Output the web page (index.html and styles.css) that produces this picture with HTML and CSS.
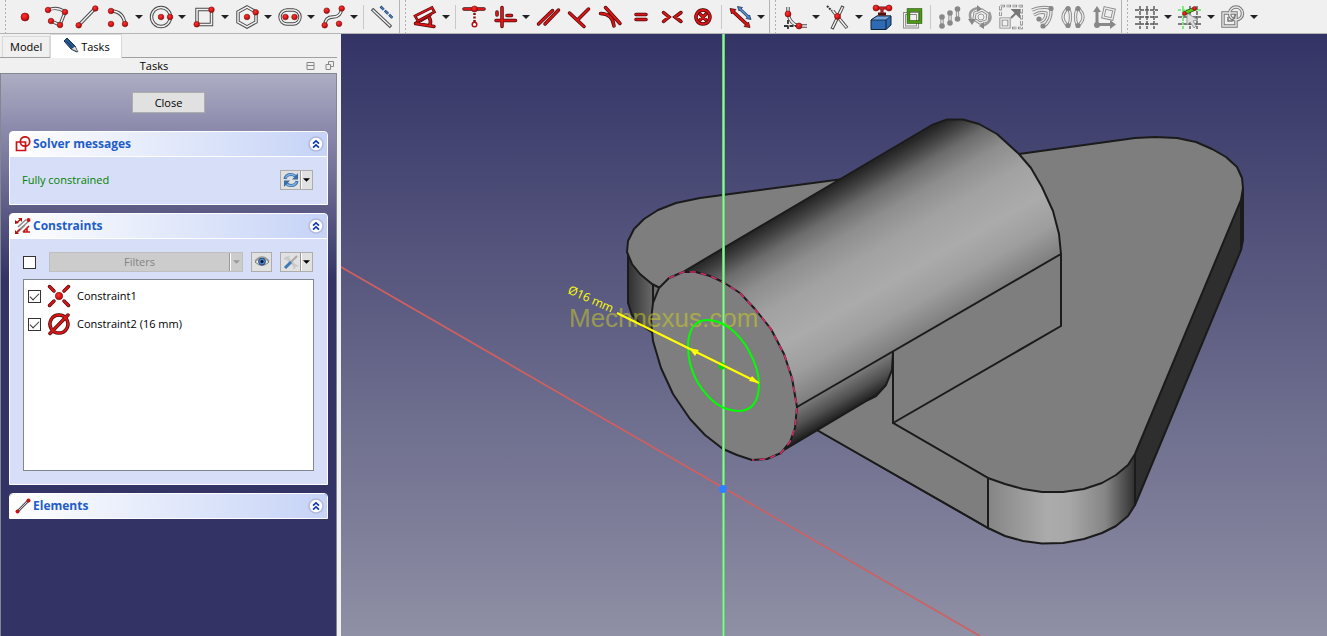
FILE: index.html
```
<!DOCTYPE html>
<html lang="en">
<head>
<meta charset="utf-8">
<title>Sketcher</title>
<link rel="stylesheet" href="styles.css">
</head>
<body>
<svg class="defs" aria-hidden="true">
  <defs>
    <radialGradient id="ball" cx="0.4" cy="0.35" r="0.7"><stop offset="0" stop-color="#f33"/><stop offset="0.6" stop-color="#d81414"/><stop offset="1" stop-color="#900"/></radialGradient>
    <symbol id="chev" viewBox="0 0 16 16"><circle cx="8" cy="8" r="7" fill="#fff" stroke="#b4b9dc" stroke-width="1.6"/><path d="M5 7.6 8 4.8 11 7.6M5 11.6 8 8.8 11 11.6" fill="none" stroke="#0c38a8" stroke-width="1.6"/></symbol>
    <symbol id="tri" viewBox="0 0 8 4"><path d="M0 0H8L4 4Z"/></symbol>
  </defs>
</svg>
<header class="toolbars">
  <div class="bar" role="toolbar" aria-label="Geometries">
    <button class="tool" aria-label="Point"><svg viewBox="0 0 24 24"><circle class="dot" cx="12" cy="12" r="4"/></svg></button>
    <button class="tool" aria-label="Polyline"><svg viewBox="0 0 24 24"><path class="wo" d="M4 5Q13 1 21 7L16 20 7 16"/><path class="wi" d="M4 5Q13 1 21 7L16 20 7 16"/><g class="dot"><circle cx="4" cy="5" r="2.8"/><circle cx="21" cy="7" r="2.8"/><circle cx="16" cy="20" r="2.8"/><circle cx="7" cy="16" r="2.8"/></g></svg></button>
    <button class="tool" aria-label="Line"><svg viewBox="0 0 24 24"><path class="wo" d="M4 20 20 3.5"/><path class="wi" d="M4 20 20 3.5"/><g class="dot"><circle cx="3.7" cy="20.3" r="2.8"/><circle cx="20.3" cy="3.5" r="2.8"/></g></svg></button>
    <button class="tool" aria-label="Arc"><svg viewBox="0 0 24 24"><path class="wo" d="M5 6Q17 6 19 19"/><path class="wi" d="M5 6Q17 6 19 19"/><g class="dot"><circle cx="5" cy="6" r="2.8"/><circle cx="5" cy="19" r="2.8"/><circle cx="19" cy="19" r="2.8"/></g></svg></button><button class="drop" aria-label="Arc options"><svg><use href="#tri"/></svg></button>
    <button class="tool" aria-label="Circle"><svg viewBox="0 0 24 24"><circle class="wo" cx="12" cy="12" r="9.5"/><circle class="wi" cx="12" cy="12" r="9.5"/><g class="dot"><circle cx="12" cy="12" r="2.8"/><circle cx="21" cy="12" r="2.8"/></g></svg></button><button class="drop" aria-label="Circle options"><svg><use href="#tri"/></svg></button>
    <button class="tool" aria-label="Rectangle"><svg viewBox="0 0 24 24"><path class="wo" d="M5 4.5H19.5V19.5H5Z"/><path class="wi" d="M5 4.5H19.5V19.5H5Z"/><g class="dot"><circle cx="19.5" cy="4.7" r="2.8"/><circle cx="4.7" cy="19.3" r="2.8"/></g></svg></button><button class="drop" aria-label="Rectangle options"><svg><use href="#tri"/></svg></button>
    <button class="tool" aria-label="Polygon"><svg viewBox="0 0 24 24"><path class="wo" d="M12 2 21 7V17L12 22 3 17V7Z"/><path class="wi" d="M12 2 21 7V17L12 22 3 17V7Z"/><g class="dot"><circle cx="12" cy="12" r="2.8"/><circle cx="20.7" cy="7.3" r="2.8"/></g></svg></button><button class="drop" aria-label="Polygon options"><svg><use href="#tri"/></svg></button>
    <button class="tool" aria-label="Slot"><svg viewBox="0 0 24 24"><rect class="wo" x="2" y="5" width="20" height="14" rx="7"/><rect class="wi" x="2" y="5" width="20" height="14" rx="7"/><g class="dot"><circle cx="7.5" cy="12" r="2.8"/><circle cx="16.5" cy="12" r="2.8"/></g></svg></button><button class="drop" aria-label="Slot options"><svg><use href="#tri"/></svg></button>
    <button class="tool" aria-label="B-spline"><svg viewBox="0 0 24 24"><path class="wo" d="M4 20Q4 12 12 12T20.5 3.5"/><path class="wi" d="M4 20Q4 12 12 12T20.5 3.5"/><g class="dot"><circle cx="5.7" cy="5.7" r="2.8"/><circle cx="3.7" cy="20.3" r="2.8"/><circle cx="20.7" cy="3.5" r="2.8"/><circle cx="18" cy="18.7" r="2.8"/></g></svg></button><button class="drop" aria-label="B-spline options"><svg><use href="#tri"/></svg></button>
    <span class="sep"></span>
    <button class="tool" aria-label="Toggle construction"><svg viewBox="0 0 24 24"><path class="wo" d="M2 4 21 22"/><path class="wi" d="M2.7 4.7 20.3 21.3"/><path d="M10.500 1.500 23 13.500" fill="none" stroke="#1f3d66" stroke-width="2.600" stroke-dasharray="4.500 1.500"/><path d="M11 2 23 13.500" fill="none" stroke="#4a82c4" stroke-width="1.400" stroke-dasharray="4 2"/></svg></button>
  </div>
  <div class="bar" role="toolbar" aria-label="Constraints">
    <button class="tool" aria-label="Dimension"><svg viewBox="0 0 24 24"><path class="ro" d="M2.500 18.500 17 10M2.500 18.500 21 21.500M16 12Q18.500 16 17 20"/><path class="ri" d="M2.500 18.500 17 10M2.500 18.500 21 21.500M16 12Q18.500 16 17 20"/><path d="M2 11 19 2.500 21.500 7 5 16Z" fill="#f4f4f4" stroke="#4a0808" stroke-width="2.600"/><path d="M2 11 19 2.500 21.500 7 5 16Z" fill="none" stroke="#dc1616" stroke-width="1.400"/></svg></button><button class="drop" aria-label="Dimension options"><svg><use href="#tri"/></svg></button>
    <span class="sep"></span>
    <button class="tool" aria-label="Horizontal or vertical"><svg viewBox="0 0 24 24"><path class="ro" d="M2 4H22"/><path class="ri" d="M2 4H22"/><path d="M12.500 8V17" stroke="#8a1010" stroke-width="2.500" stroke-dasharray="2 1.500"/><circle class="dot" cx="12.500" cy="4" r="3"/><circle cx="12.500" cy="19.500" r="2.300" fill="#fff" stroke="#b01010" stroke-width="1.500"/></svg></button>
    <button class="tool" aria-label="Axis constraint"><svg viewBox="0 0 24 24"><path class="ro" d="M9 2.500V21.500M3 15.500H22.500M4 7V10M14 10.500H18.500"/><path class="ri" d="M9 2.500V21.500M3 15.500H22.500M4 7V10M14 10.500H18.500"/></svg></button><button class="drop" aria-label="Axis constraint options"><svg><use href="#tri"/></svg></button>
    <button class="tool" aria-label="Parallel"><svg viewBox="0 0 24 24"><path class="ro" d="M2.500 19 16.500 5.500M9 19 22.500 5"/><path class="ri" d="M2.500 19 16.500 5.500M9 19 22.500 5"/></svg></button>
    <button class="tool" aria-label="Perpendicular"><svg viewBox="0 0 24 24"><path class="ro" d="M2.500 8 17 21.500M21.500 4 11 14.500"/><path class="ri" d="M2.500 8 17 21.500M21.500 4 11 14.500"/></svg></button>
    <button class="tool" aria-label="Tangent"><svg viewBox="0 0 24 24"><path class="ro" d="M7.500 2.500 22 18.500M2.500 8.500Q14.500 8.500 16 21"/><path class="ri" d="M7.500 2.500 22 18.500M2.500 8.500Q14.500 8.500 16 21"/></svg></button>
    <button class="tool" aria-label="Equal"><svg viewBox="0 0 24 24"><path class="ro" d="M7 9.500H17M7 14.500H17"/><path class="ri" d="M7 9.500H17M7 14.500H17"/></svg></button>
    <button class="tool" aria-label="Symmetric"><svg viewBox="0 0 24 24"><path class="ro" d="M3.500 7.500 9 12 3.500 16.500M21 7.500 15 12 21 16.500"/><path class="ri" d="M3.500 7.500 9 12 3.500 16.500M21 7.500 15 12 21 16.500"/></svg></button>
    <button class="tool" aria-label="Block"><svg viewBox="0 0 24 24"><path class="ro" d="M12 5A7 7 0 1 1 11.9 5M9 9 15 15M15 9 9 15"/><path class="ri" d="M12 5A7 7 0 1 1 11.9 5M9 9 15 15M15 9 9 15"/></svg></button>
    <span class="sep"></span>
    <button class="tool" aria-label="Toggle driving"><svg viewBox="0 0 24 24"><path d="M5 6.500 19 19.500" stroke="#4a0808" stroke-width="3.600"/><path d="M2 3.500 8 4.500 3.500 9ZM22 22.500 16 21.500 20.500 17Z" fill="#dc1616" stroke="#4a0808" stroke-width=".8"/><path d="M5 6.500 19 19.500" stroke="#dc1616" stroke-width="2"/><path d="M12 4 20.500 12" stroke="#1f3d66" stroke-width="3"/><path d="M9.500 1.500 14.500 2.500 11 6ZM23 14.500 18 13.500 21.500 10Z" fill="#4a82c4" stroke="#1f3d66" stroke-width=".8"/><path d="M12 4 20.500 12" stroke="#5d93d0" stroke-width="1.500"/></svg></button><button class="drop" aria-label="Toggle driving options"><svg><use href="#tri"/></svg></button>
  </div>
  <div class="bar" role="toolbar" aria-label="Sketcher tools">
    <button class="tool" aria-label="Fillet"><svg viewBox="0 0 24 24"><path class="wo" d="M5 2V9Q7 19 16 21H24"/><path class="wi" d="M5 2V9Q7 19 16 21H24"/><path d="M5 15V24M1 21H14" stroke="#333" stroke-width="1.800" stroke-dasharray="4 1.500"/><g class="dot"><circle cx="5" cy="9" r="3"/><circle cx="16" cy="21" r="3"/></g></svg></button><button class="drop" aria-label="Fillet options"><svg><use href="#tri"/></svg></button>
    <button class="tool" aria-label="Trim"><svg viewBox="0 0 24 24"><path class="wo" d="M7 6 21 23M17 1 6 24"/><path class="wi" d="M7 6 20.500 22.400M16.600 2 6.400 23"/><path d="M1 1 6 6" stroke="#333" stroke-width="2" stroke-dasharray="2 1"/><circle class="dot" cx="11.500" cy="11.500" r="3"/></svg></button><button class="drop" aria-label="Trim options"><svg><use href="#tri"/></svg></button>
    <button class="tool" aria-label="External geometry"><svg viewBox="0 0 24 24"><path d="M2 15 8 11H22V20L17 24.500H2Z" fill="#2f6bb5" stroke="#123" /><path d="M2 15 8 11H22L17 15Z" fill="#71a5e0" stroke="#123" stroke-width=".8"/><path d="M17 15V24" stroke="#123"/><path d="M7 3H19M13 3V9M9 9H17" stroke="#511" stroke-width="3"/><path d="M7 3H19M13 3V8" stroke="#d22" stroke-width="1.500"/><g class="dot"><circle cx="7" cy="3" r="3"/><circle cx="20" cy="3" r="3"/></g></svg></button>
    <button class="tool" aria-label="Carbon copy"><svg viewBox="0 0 24 24"><path d="M4.500 8.500H17.500V22H4.500Z" fill="none" stroke="#888" stroke-width="3"/><path d="M4.500 8.500H17.500V22H4.500Z" fill="none" stroke="#f4f4f4" stroke-width="1.200"/><path d="M8.500 5H20.500V17H8.500Z" fill="none" stroke="#2d5a0c" stroke-width="3.400"/><path d="M8.500 5H20.500V17H8.500Z" fill="none" stroke="#4c9a14" stroke-width="2.200"/></svg></button>
    <span class="sep"></span>
    <button class="tool off" disabled aria-label="Move"><svg viewBox="0 0 24 24"><path class="g" d="M5 11V21M13 7V17M20.500 4V15"/><path class="gi" d="M5 11V21M13 7V17M20.500 4V15"/><g fill="#888"><circle cx="5" cy="12" r="2.8"/><circle cx="5" cy="21" r="2.8"/><circle cx="13" cy="8" r="2.8"/><circle cx="13" cy="18" r="2.8"/><circle cx="20.500" cy="4" r="2.8"/><circle cx="20.500" cy="14" r="2.8"/></g></svg></button>
    <button class="tool off" disabled aria-label="Rotate"><svg viewBox="0 0 24 24"><path class="g" d="M7 8 14 5 20 9 19 16 12 18 6 14Z"/><path class="gi" d="M7 8 14 5 20 9 19 16 12 18 6 14Z"/><circle cx="13" cy="12" r="3" fill="none" stroke="#999"/><path d="M3 15Q-1 5 10 3M21 7Q26 17 14 21" fill="none" stroke="#999" stroke-width="2.500"/><path d="M9 0 14 4 9 7ZM0 14H8L4 20ZM16 17V24L11 21Z" fill="#888"/></svg></button>
    <button class="tool off" disabled aria-label="Scale"><svg viewBox="0 0 24 24"><path d="M1.500 1H22.500V23H13M1.500 1V11" fill="none" stroke="#888" stroke-width="2.600" stroke-dasharray="4.500 1.500"/><path d="M1.500 1H22.500V23H13M1.500 1V11" fill="none" stroke="#eee" stroke-dasharray="3.500 2.500"/><path class="g" d="M2 14H10V22H2Z"/><path class="gi" d="M2 14H10V22H2Z"/><path d="M12 13 18 7M14 5H20V11Z" stroke="#777" stroke-width="2" fill="#777"/></svg></button>
    <button class="tool off" disabled aria-label="Offset"><svg viewBox="0 0 24 24"><path class="g" d="M2 5Q10 1 21 3Q22 16 13 22M4 10Q10 6 16 8Q16 15 10 17"/><path class="gi" d="M2 5Q10 1 21 3Q22 16 13 22M4 10Q10 6 16 8Q16 15 10 17"/><g fill="#888"><circle cx="21" cy="3.500" r="2.600"/><circle cx="13" cy="21" r="2.600"/><circle cx="9" cy="14" r="2.600"/></g></svg></button>
    <button class="tool off" disabled aria-label="Mirror"><svg viewBox="0 0 24 24"><path class="g" d="M7 3Q-3 12 7 21M17 3Q27 12 17 21M8 4Q11 12 8 20M16 4Q13 12 16 20"/><path class="gi" d="M7 3Q-3 12 7 21M17 3Q27 12 17 21M8 4Q11 12 8 20M16 4Q13 12 16 20"/><g fill="#888"><circle cx="7" cy="3.500" r="2.600"/><circle cx="7" cy="20.500" r="2.600"/><circle cx="17" cy="3.500" r="2.600"/><circle cx="17" cy="20.500" r="2.600"/></g></svg></button>
    <button class="tool off" disabled aria-label="Remove axes alignment"><svg viewBox="0 0 24 24"><path class="g" d="M13 3 22 5 20 14 11 12Z"/><path class="gi" d="M13 3 22 5 20 14 11 12Z"/><path d="M5 5V19.500H19" fill="none" stroke="#888" stroke-width="3"/><path d="M1 7 5 1 9 7ZM18 15 24 19.500 18 24Z" fill="#888"/><circle cx="5" cy="20" r="3" fill="#888"/></svg></button>
  </div>
  <div class="bar last" role="toolbar" aria-label="Edit tools">
    <button class="tool" aria-label="Grid"><svg viewBox="0 0 24 24"><path class="grid" d="M5 1V24M12 1V24M19 1V24M0 5H23M0 12H23M0 19H23"/></svg></button><button class="drop" aria-label="Grid options"><svg><use href="#tri"/></svg></button>
    <button class="tool" aria-label="Snap"><svg viewBox="0 0 24 24"><path class="grid" d="M12 1V24M19 1V24M0 12H23M0 19H23"/><path d="M5 1V24M0 5H23" stroke="#5be65b" stroke-width="1.500" stroke-dasharray="3 1"/><path d="M9 8V20L12 17 16 23 18 21 15 16 20 15Z" fill="#ddd" stroke="#999"/><path d="M7 8 16 4" stroke="#153808" stroke-width="4"/><path d="M7 8 16 4" stroke="#5cc91d" stroke-width="2.500"/><g class="dot"><circle cx="6.500" cy="8.500" r="2"/><circle cx="16.500" cy="3.500" r="2"/></g></svg></button><button class="drop" aria-label="Snap options"><svg><use href="#tri"/></svg></button>
    <button class="tool" aria-label="Rendering order"><svg viewBox="0 0 24 24"><g fill="none" stroke="#777" stroke-width="3.400"><path d="M2 8H15V21H2Z"/><circle cx="15" cy="8.500" r="6.500"/></g><g fill="none" stroke="#e6e6e6" stroke-width="1.400"><path d="M2 8H15V21H2Z"/><circle cx="15" cy="8.500" r="6.500"/></g><path d="M7 12V16H11L15 9" stroke="#777" stroke-width="1.500" fill="none"/></svg></button><button class="drop" aria-label="Rendering options"><svg><use href="#tri"/></svg></button>
  </div>
</header>
<main class="work">
  <aside class="side">
    <div class="tabs" role="tablist">
      <button class="tab" role="tab" aria-selected="false">Model</button>
      <button class="tab on" role="tab" aria-selected="true"><svg viewBox="0 0 16 16"><path d="M1 4 4 1 12 9 14 15 8 12Z" fill="#2b5a92" stroke="#123256"/><path d="M12 9 15 15 8 12Z" fill="#ddd" stroke="#345" stroke-width=".7"/><path d="M3 4 10 11M5 2.500 12 9.500" stroke="#173b66"/></svg>Tasks</button>
    </div>
    <div class="dock"><h1>Tasks</h1>
      <button class="mini" aria-label="Collapse"><svg viewBox="0 0 9 9"><path d="M1 1.500H8V8.500H1ZM1 4.500H8"/></svg></button>
      <button class="mini" aria-label="Float"><svg viewBox="0 0 9 9"><path d="M1 3.500H5.500V8.500H1ZM3.500 3.500V.5H8.500V5.500H5.500"/></svg></button>
    </div>
    <div class="panel">
      <button class="close">Close</button>
      <section class="card">
        <header class="head"><svg class="hi" viewBox="0 0 16 16"><path d="M1.500 6H10.500V14.500H1.500Z" fill="none" stroke="#c81414" stroke-width="1.700"/><circle cx="10" cy="5.500" r="4.700" fill="none" stroke="#c81414" stroke-width="1.700"/></svg><h2>Solver messages</h2><button class="fold" aria-label="Collapse solver messages"><svg><use href="#chev"/></svg></button></header>
        <div class="body solver">
          <p>Fully constrained</p>
          <div class="split"><button aria-label="Update"><svg viewBox="0 0 16 16"><path d="M2 7Q3 2.500 8 2.500Q11 2.500 12.500 4.500" fill="none" stroke="#3b6ea5" stroke-width="3.200"/><path d="M15 1V7.500H9ZM1 15V8.500H7Z" fill="#3b6ea5"/><path d="M14 9Q13 13.500 8 13.500Q5 13.500 3.500 11.500" fill="none" stroke="#3b6ea5" stroke-width="3.200"/><path d="M2.500 6Q4 2.500 8 2.500Q11 2.500 12 4M13.500 10Q12 13.500 8 13.500Q5 13.500 4 12" fill="none" stroke="#7fb0e0" stroke-width="1.500"/></svg></button><button class="dd" aria-label="Update options"><svg><use href="#tri"/></svg></button></div>
        </div>
      </section>
      <section class="card">
        <header class="head"><svg class="hi" viewBox="0 0 16 16"><path d="M3 9 11 1.500M5 11 14 3M2 15 10 7" stroke="#888" stroke-width="1.400"/><path d="M2 4.500 6 1M2 14 5 11M8 14 14 8M8 14H15M12 10V14" stroke="#c81414" stroke-width="1.600" fill="none"/><path d="M0 2V6L4 5ZM0 12V16H4ZM3 0H7V4Z" fill="#b01010"/><circle cx="13.500" cy="2" r="2" fill="#c81414"/></svg><h2>Constraints</h2><button class="fold" aria-label="Collapse constraints"><svg><use href="#chev"/></svg></button></header>
        <div class="body">
          <div class="filters">
            <input type="checkbox" aria-label="Enable filters">
            <div class="filter"><button disabled>Filters</button><button class="dd" disabled aria-label="Filter options"><svg><use href="#tri"/></svg></button></div>
            <button class="eye" aria-label="Show or hide"><svg viewBox="0 0 16 12"><path d="M1 6Q8-2 15 6Q8 13 1 6Z" fill="#eee" stroke="#777"/><circle cx="8" cy="5.500" r="3.500" fill="#4b86c9" stroke="#244a7a"/><circle cx="8" cy="5.500" r="1.500" fill="#112"/><path d="M1 5Q8-3 15 5" fill="none" stroke="#999" stroke-width="1.500"/></svg></button>
            <div class="split"><button aria-label="Settings"><svg viewBox="0 0 16 16"><path d="M3 3 13 13" stroke="#c8c8c8" stroke-width="3"/><path d="M1 4Q5 7 6 2M11 15Q11 10 15 12" stroke="#ccc" stroke-width="2" fill="none"/><path d="M8 8 14 2" stroke="#aaa" stroke-width="2"/><path d="M2 14 8 8" stroke="#3f78b8" stroke-width="3"/></svg></button><button class="dd" aria-label="Settings options"><svg><use href="#tri"/></svg></button></div>
          </div>
          <ul class="list">
            <li><label><input type="checkbox" checked><svg viewBox="0 0 24 24"><path class="ro" d="M2.500 2.500 7 7M21.500 2.500 17 7M2.500 21.500 7 17M21.500 21.500 17 17"/><path class="ri" d="M2.500 2.500 7 7M21.500 2.500 17 7M2.500 21.500 7 17M21.500 21.500 17 17"/><circle class="dot" cx="12" cy="12" r="3.700"/></svg>Constraint1</label></li>
            <li><label><input type="checkbox" checked><svg viewBox="0 0 24 24"><path class="ro" d="M12 3A9 9 0 1 1 11.9 3M3 21.500 21 3"/><path class="ri" d="M12 3A9 9 0 1 1 11.9 3M3 21.500 21 3"/></svg>Constraint2 (16 mm)</label></li>
          </ul>
        </div>
      </section>
      <section class="card">
        <header class="head"><svg class="hi" viewBox="0 0 16 16"><path d="M2 14 14 2" stroke="#555" stroke-width="2.600"/><path d="M2 14 14 2" stroke="#ccc"/><circle cx="2.500" cy="13.500" r="2" fill="#c81414"/><circle cx="13.500" cy="2.500" r="2" fill="#c81414"/></svg><h2>Elements</h2><button class="fold" aria-label="Expand elements"><svg><use href="#chev"/></svg></button></header>
      </section>
    </div>
  </aside>
  <section class="view" aria-label="3D view">
    <svg viewBox="341 34 986 602" preserveAspectRatio="xMinYMin slice">
      <defs>
        <linearGradient id="cyl" gradientUnits="userSpaceOnUse" x1="685" y1="271" x2="787" y2="448"><stop offset="0" stop-color="#262626"/><stop offset=".06" stop-color="#444"/><stop offset=".13" stop-color="#6c6c6c"/><stop offset=".24" stop-color="#8e8e8e"/><stop offset=".38" stop-color="#a2a2a2"/><stop offset=".55" stop-color="#ababab"/><stop offset=".7" stop-color="#9e9e9e"/><stop offset=".84" stop-color="#808080"/><stop offset=".93" stop-color="#505050"/><stop offset="1" stop-color="#1c1c1c"/></linearGradient>
        <linearGradient id="corner"><stop offset="0" stop-color="#858585"/><stop offset=".4" stop-color="#ababab"/><stop offset=".55" stop-color="#a8a8a8"/><stop offset=".8" stop-color="#858585"/><stop offset="1" stop-color="#303030"/></linearGradient>
        <linearGradient id="lcorner"><stop offset="0" stop-color="#303030"/><stop offset="1" stop-color="#858585"/></linearGradient>
      </defs>
      <g stroke="#1b1b1b" stroke-width="2" stroke-linejoin="round">
        <path fill="url(#lcorner)" d="M628 250V303L632 315 640 324 653 333 665 338V280Z"/>
        <path fill="#2e2e2e" d="M1243 188V240L1241 250 1135 505V450Z"/>
        <path fill="none" d="M1241 198V250"/>
        <path fill="#7e7e7e" d="M817 430 988 528V478L893 423 860 380Z"/>
        <path fill="url(#corner)" d="M988 478V528L1005 536 1023 541 1042 543.5 1063 543 1084 539 1102 533 1116 526 1128 516 1135 505V454Z"/>
        <path fill="#7e7e7e" d="M843 179 700 198 676 203 658 210 644 219 634 229 628 241 627 252 632 264 640 274 652 284 660 288 817 430 893 423 988 478 1005 484 1023 489 1042 492 1063 492 1084 489 1102 483 1116 475 1128 465 1135 454 1241 200 1243 188 1242 178 1237 167 1226 157 1212 149 1196 142 1177 138 1155 137 1135 138 1019 154Z"/>
        <path fill="none" d="M653 284V333"/>
      </g>
      <path fill="#7e7e7e" d="M817 430 860 370 895 352V424L988 478 987 526Z"/>
      <path fill="none" stroke="#1b1b1b" stroke-width="2" d="M817 430 988 528V478L893 423"/>
      <path fill="url(#cyl)" d="M683 272 932 125 947 119.5 963 119.5 979 124 997 134 1019 154 1031 168 1042 187 1053 211 1059 234 1061 254 893 352 892 370 886 385 876 396 868 400 779 453Z"/>
      <path fill="#7e7e7e" d="M1061 254V326L893 423V352Z"/>
      <g fill="none" stroke="#1b1b1b" stroke-width="2" stroke-linejoin="round">
        <path d="M683 272 932 125 947 119.5 963 119.5 979 124 997 134 1019 154 1031 168 1042 187 1053 211 1059 234 1061 254V326L893 423V352L892 370 886 385 876 396 868 400 779 453"/>
        <path d="M797 407 1061 254"/>
      </g>
      <path fill="#7e7e7e" stroke="#1b1b1b" stroke-width="2" stroke-linejoin="round" d="M683 272 696 272 710 276 723 282 740 293 755 309 771 329 784 354 792 378 797 407 795 428 790 442 781 453 767 459 752 460 737 455 723 449 705 435 690 419 673 394 661 368 653 341 651 320 653 303 659 288 669 278Z"/>
      <path fill="none" stroke="#d02d6c" stroke-width="1.600" stroke-dasharray="6 5" d="M669 278 683 272 696 272 710 276 723 282 740 293 755 309 771 329 784 354 792 378 797 407 795 428 790 442 781 453 767 459 752 460"/>
      <text class="mark" x="569" y="327">Mechnexus.com</text>
      <path stroke="#d0605f" stroke-width="1.700" d="M341 267 980 636"/>
      <path stroke="#68b97e" stroke-width="3" d="M723.5 34V700"/>
      <path stroke="#84ff88" stroke-width="1.500" d="M723.5 34V700"/>
      <path fill="none" stroke="#0f0" stroke-width="2" d="M688 346C688 330 695 320 707 320C722 320 738 331 749 351C756 364 759 374 759 384C759 401 752 411 739 411C722 411 708 399 698 383C691 371 688 358 688 346Z"/>
      <circle cx="722" cy="366" r="3.500" fill="#0d0"/>
      <circle cx="723" cy="489" r="4" fill="#2f80ff"/>
      <path stroke="#ff0" stroke-width="2" d="M617 313 759 383"/>
      <path fill="#ff0" d="M759 383 752 376 749 381ZM689 348 699 350 695 356Z"/>
      <text class="dim" transform="translate(567 293) rotate(24)">Ø16 mm</text>
    </svg>
  </section>
</main>
</body>
</html>
```
FILE: styles.css
```
* { box-sizing: border-box; }
body {
  margin: 0;
  height: 100vh;
  display: flex;
  flex-direction: column;
  overflow: hidden;
  background: #f0f0f0;
  color: #000;
  font: 11px/16px "Open Sans", "Noto Sans", sans-serif;
}
button { font: inherit; color: inherit; padding: 0; border: 0; background: none; }
h1, h2, p, ul { margin: 0; padding: 0; font: inherit; }
.defs { position: absolute; width: 0; height: 0; }

.toolbars { display: flex; flex: none; height: 34px; border-bottom: 1px solid #b4b4b4; }
.bar {
  display: flex;
  align-items: center;
  padding: 0 2px 0 9px;
  border-right: 1px solid #b4b4b4;
  background: radial-gradient(circle, #b0b0b0 1px, transparent 1px) 4px 3px / 3px 4px repeat-y;
}
.bar.last { flex: 1; border-right: 0; }
.tool { width: 31px; height: 32px; display: grid; place-items: center; }
.tool svg { width: 24px; height: 24px; overflow: visible; }
.drop { width: 12px; height: 32px; display: grid; place-items: center; }
.drop svg { width: 8px; height: 4px; fill: #222; }
.sep { width: 1px; height: 24px; margin: 0 2px 0 3px; background: #c8c8c8; }
.dot { fill: url(#ball); stroke: #7a1010; stroke-width: .6; }
.wo, .wi, .ro, .ri, .g, .gi { fill: none; }
.wo { stroke: #484848; stroke-width: 3.4; }
.wi { stroke: #f2f2f2; stroke-width: 1.5; }
.ro { stroke: #4a0808; stroke-width: 3.5; stroke-linecap: round; }
.ri { stroke: #dc1616; stroke-width: 2; stroke-linecap: round; }
.g { stroke: #888; stroke-width: 3.2; }
.gi { stroke: #ececec; stroke-width: 1.4; }
.grid { stroke: #555; stroke-width: 1.4; stroke-dasharray: 4 1; fill: none; }

.work { display: flex; flex: 1; min-height: 0; }
.side { flex: none; width: 341px; padding-right: 4px; display: flex; flex-direction: column; }
.tabs { display: flex; align-items: flex-end; height: 24px; padding-left: 2px; border-bottom: 1px solid #a0a0a0; }
.tab { height: 21px; padding: 0 7px; border: 1px solid #d9d9d9; border-bottom: 0; line-height: 20px; }
.tab.on { height: 24px; padding: 0 11px 0 12px; display: flex; align-items: center; gap: 2px; background: #fff; margin-bottom: -1px; }
.tab svg { width: 16px; height: 16px; margin-top: -3px; }
.dock { display: flex; align-items: center; height: 15px; gap: 10px; padding-right: 3px; }
.dock h1 { flex: 1; text-align: center; padding-left: 12px; }
.mini { display: grid; }
.mini svg { width: 9px; height: 9px; fill: none; stroke: #888; }
.panel {
  flex: 1;
  display: flex;
  flex-direction: column;
  gap: 8px;
  padding: 18px 8px 0;
  border: 1px solid #828790;
  border-bottom: 0;
  background: linear-gradient(#adadc3, #8f8dae 50px, #333366 205px);
}
.close { align-self: center; width: 73px; height: 21px; margin-bottom: 10px; border: 1px solid #adadad; background: #e1e1e1; }
.card { border: 1px solid #fff; border-radius: 4px 4px 0 0; background: #d6dff7; overflow: hidden; }
.head { display: flex; align-items: center; gap: 2px; height: 24px; padding: 0 3px 0 5px; background: linear-gradient(90deg, #fff, #c6d3f7); }
.hi { width: 16px; height: 16px; }
.head h2 { flex: 1; color: #215dc6; font-weight: 700; font-size: 12px; }
.fold { display: grid; }
.fold svg { width: 16px; height: 16px; }
.body { border-top: 1px solid #fff; padding: 13px; }
.solver { display: flex; align-items: center; justify-content: space-between; padding: 13px 14px 14px 12px; }
.solver p { color: #008000; }
.split { display: flex; flex: none; width: 33px; height: 20px; border: 1px solid #adadad; background: #e1e1e1; }
.split button:first-child { width: 19px; display: grid; place-items: center; }
.split button:first-child svg { width: 16px; height: 16px; }
.dd { flex: 1; display: grid; place-items: center; border-left: 1px solid #999; box-shadow: inset 1px 0 #fff; }
.dd svg { width: 7px; height: 4px; }
.filters { display: flex; align-items: center; padding-right: 1px; }
input[type=checkbox] { appearance: none; flex: none; width: 13px; height: 13px; margin: 0; border: 1px solid #333; background: #fff; }
input[type=checkbox]:checked::after { content: ""; display: block; width: 8px; height: 4px; margin: 2px 0 0 1px; border: solid #333; border-width: 0 0 1px 1px; rotate: -45deg; }
.filter { flex: 1; display: flex; height: 20px; margin: 0 8px 0 13px; border: 1px solid #bfbfbf; background: #ccc; color: #838383; }
.filter button:first-child { flex: 1; }
.filter .dd { flex: none; width: 13px; fill: #999; }
.eye { width: 21px; height: 20px; margin-right: 8px; border: 1px solid #adadad; background: #e1e1e1; display: grid; place-items: center; }
.eye svg { width: 16px; height: 12px; }
.list { list-style: none; height: 192px; margin-top: 7px; padding: 2px 4px; border: 1px solid #828790; background: #fff; }
.list label { display: flex; align-items: center; height: 28px; }
.list svg { width: 24px; height: 24px; margin: 0 6px; }

.view { flex: 1; min-width: 0; background: linear-gradient(#333366, #8f8fa5); }
.view svg { display: block; width: 100%; height: 100%; }
.mark { font: 26px "Liberation Sans", Arial, sans-serif; fill: #d2d21e; opacity: .5; }
.dim { font: 12px "Open Sans", sans-serif; fill: #ff0; }
```
